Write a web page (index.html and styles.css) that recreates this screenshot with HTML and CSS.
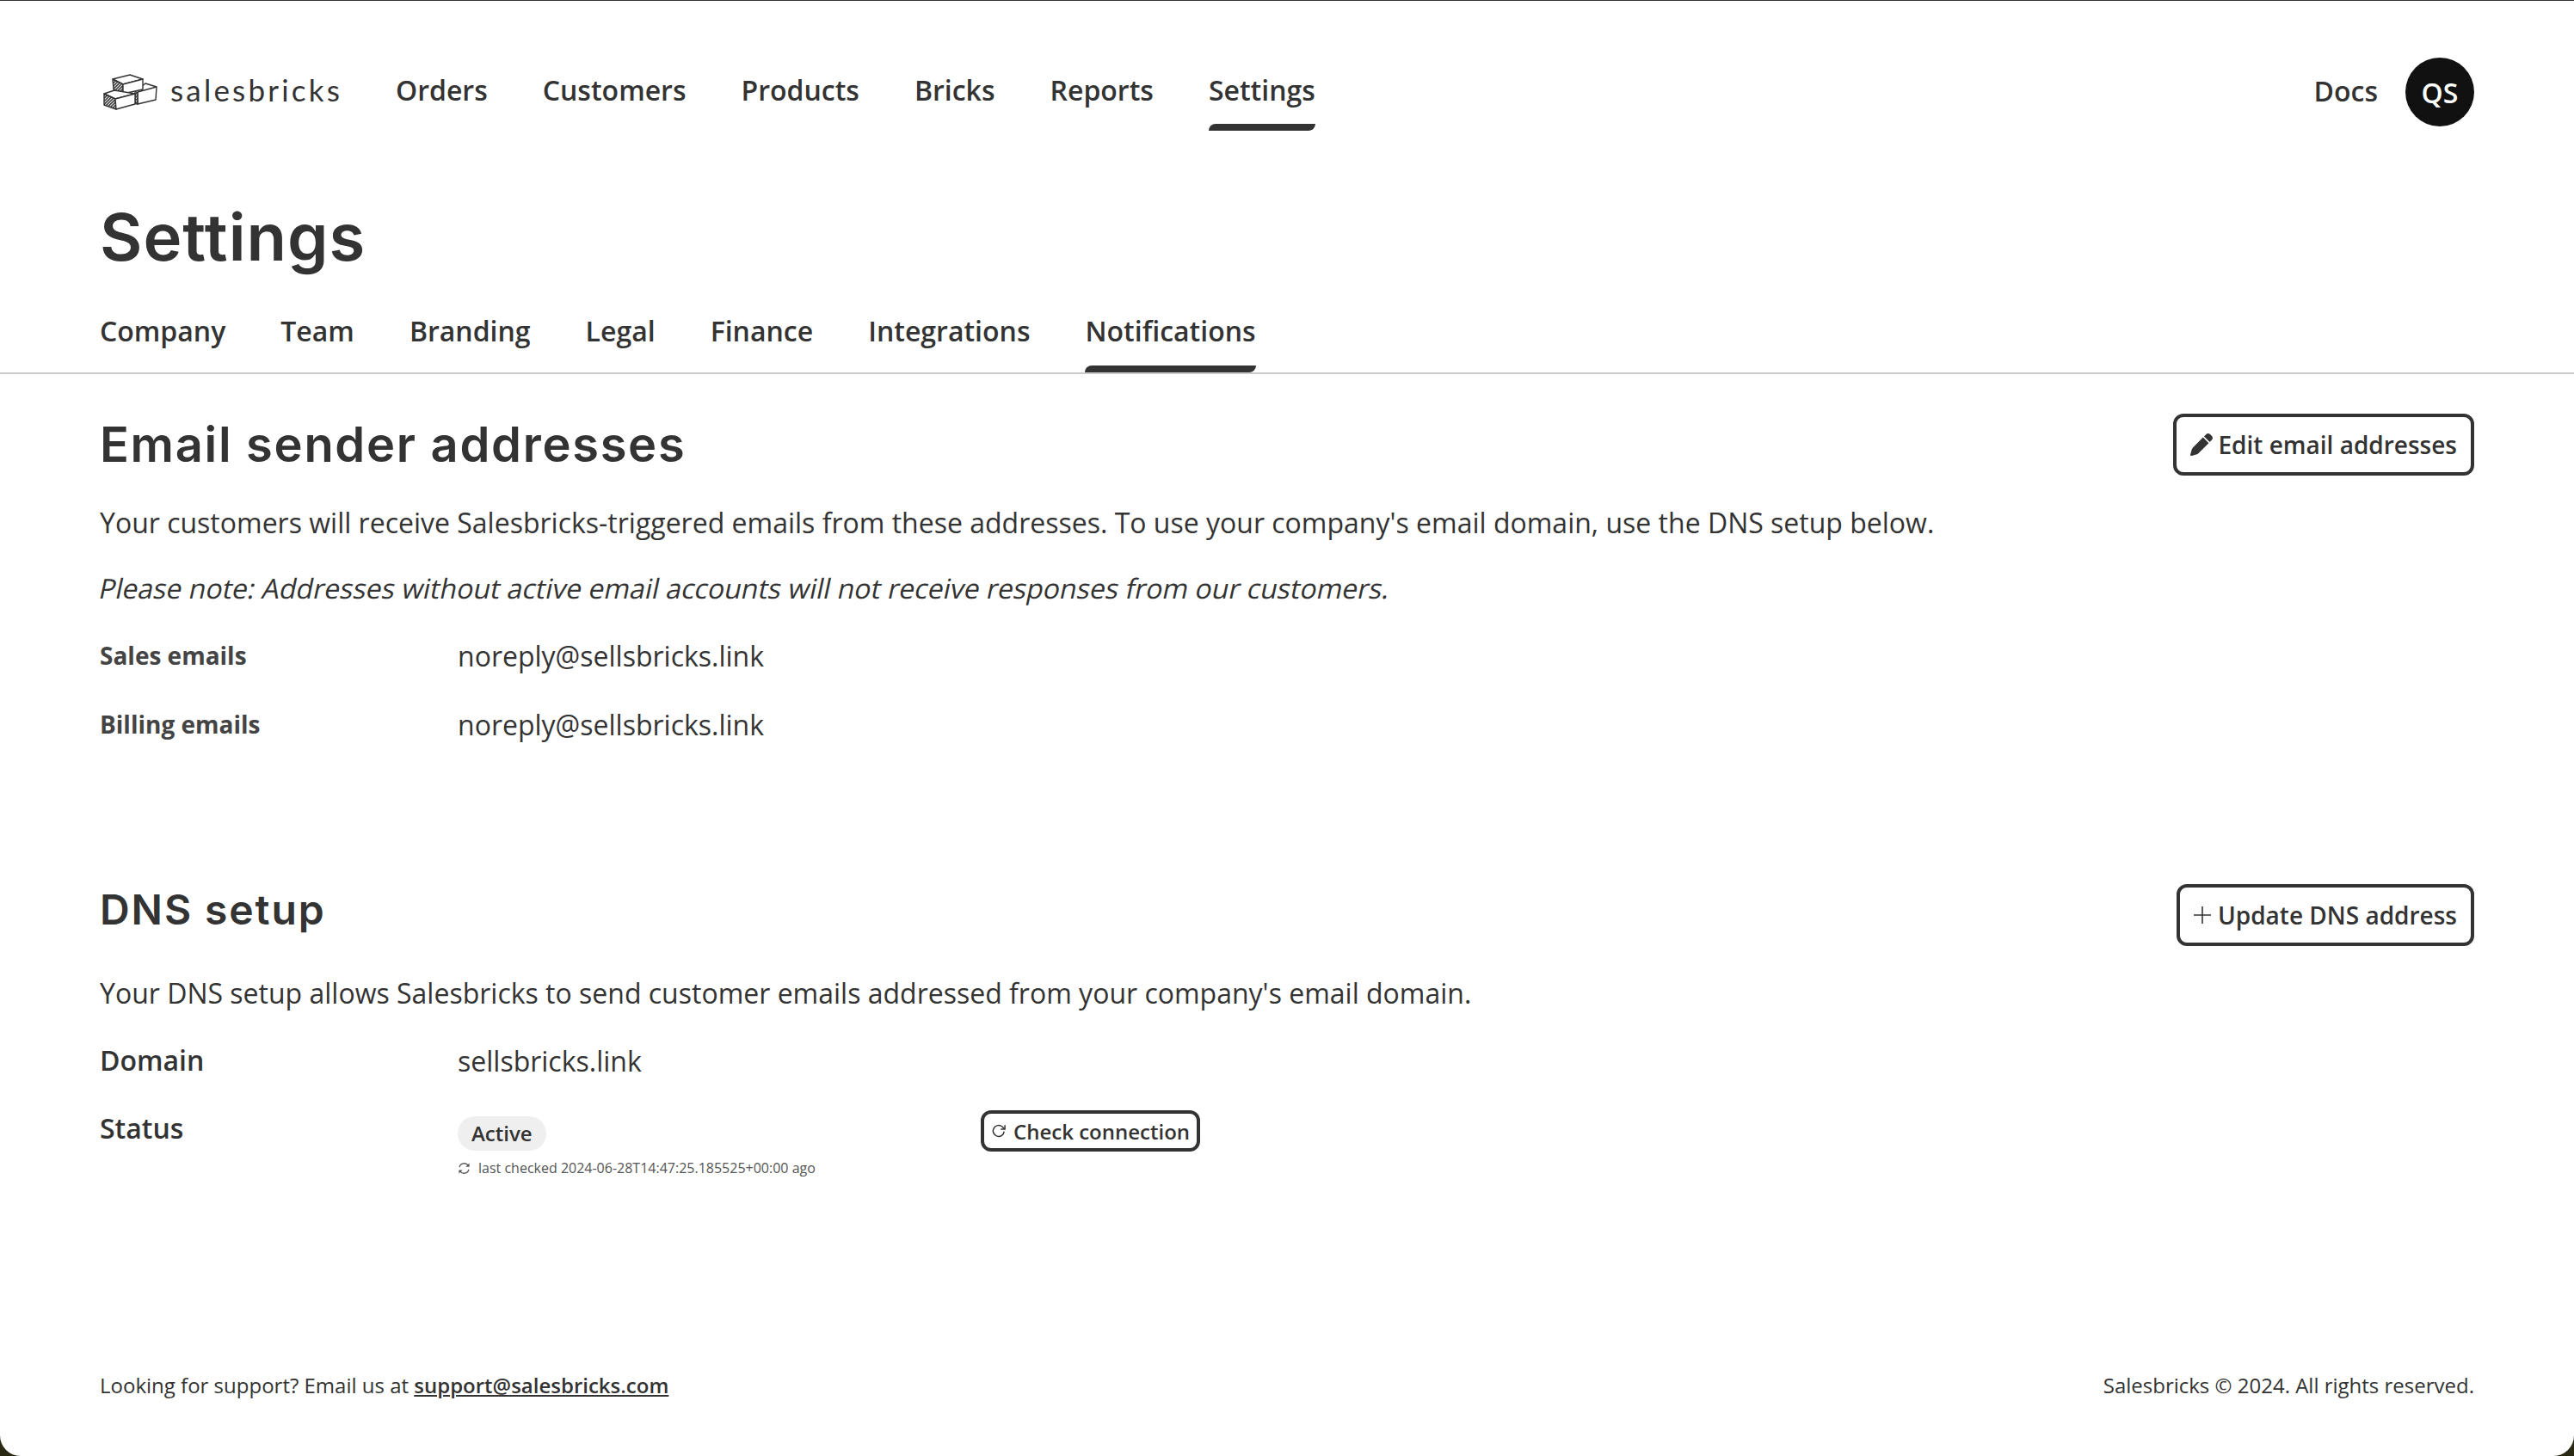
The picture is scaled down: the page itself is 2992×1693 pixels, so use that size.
FILE: index.html
```html
<!DOCTYPE html>
<html lang="en">
<head>
    <meta charset="UTF-8">
    <meta name="viewport" content="width=device-width, initial-scale=1.0">
    <title>Settings - Notifications</title>
    <link rel="stylesheet" href="styles.css">
</head>
<body>
    <div class="app">
        <header class="topbar">
            <a class="logo" href="#">
                <svg class="logo-mark" viewBox="0 0 64 42" fill="#fff" stroke="#333" stroke-width="1.4" stroke-linejoin="round">
                    <defs>
                        <pattern id="hatch" width="2.5" height="2.5" patternUnits="userSpaceOnUse" patternTransform="rotate(-45)">
                            <rect width="2.5" height="2.5" fill="#fff" stroke="none"/>
                            <rect width="2.5" height="1.5" fill="#333" stroke="none"/>
                        </pattern>
                    </defs>
                    <path d="M37 21 L49 11 L62 15 L61 30 L40 35 L37 34 Z"/>
                    <path d="M40 21 L62 15 M40 21 L40 35"/>
                    <path d="M37 23 L40 21 L40 35 L37 34 Z" fill="url(#hatch)"/>
                    <path d="M11 6 L31 1 L46 6 L23 12 Z"/>
                    <path d="M11 6 L23 12 L23 23 L12 18 Z" fill="url(#hatch)"/>
                    <path d="M23 12 L46 6 L46 18 L23 23 Z"/>
                    <path d="M1 23 L13 19 L37 23 L14 29 Z"/>
                    <path d="M1 23 L14 29 L15 41 L1 36 Z" fill="url(#hatch)"/>
                    <path d="M14 29 L37 23 L37 35 L15 41 Z"/>
                </svg>
                <span class="logo-word">salesbricks</span>
            </a>
            <nav class="main-nav">
                <a href="#">Orders</a>
                <a href="#">Customers</a>
                <a href="#">Products</a>
                <a href="#">Bricks</a>
                <a href="#">Reports</a>
                <a class="active" href="#">Settings</a>
            </nav>
            <div class="user-nav">
                <a href="#">Docs</a>
                <div class="avatar">QS</div>
            </div>
        </header>

        <h1 class="page-title">Settings</h1>

        <div class="tabs">
            <a href="#">Company</a>
            <a href="#">Team</a>
            <a href="#">Branding</a>
            <a href="#">Legal</a>
            <a href="#">Finance</a>
            <a href="#">Integrations</a>
            <a class="active" href="#">Notifications</a>
        </div>

        <main class="content">
            <section class="sender">
                <div class="section-head">
                    <h2 class="title-lg">Email sender addresses</h2>
                    <button class="btn">
                        <svg class="btn-icon" viewBox="0 0 512 512"><path fill="#333" d="M362.7 19.3 314.3 67.7 444.3 197.7 492.7 149.3c25-25 25-65.500 0-90.500L453.300 19.300c-25-25-65.500-25-90.600 0zM291.700 90.300 58.600 323.500c-10.400 10.400-18 23.300-22.200 37.400L1 481.200c-2.500 8.500-.2 17.600 6 23.800s15.300 8.500 23.700 6.100l120.300-35.400c14.100-4.200 27-11.800 37.400-22.200L421.700 220.300 291.700 90.300z"/></svg>
                        Edit email addresses
                    </button>
                </div>
                <p>Your customers will receive Salesbricks-triggered emails from these addresses. To use your company's email domain, use the DNS setup below.</p>
                <p class="note"><span>Please note: Addresses without active email accounts will not receive responses from our customers.</span></p>
                <div class="row">
                    <div class="label-sm">Sales emails</div>
                    <div class="value">noreply@sellsbricks.link</div>
                </div>
                <div class="row">
                    <div class="label-sm">Billing emails</div>
                    <div class="value">noreply@sellsbricks.link</div>
                </div>
            </section>

            <section class="dns">
                <div class="section-head">
                    <h2 class="title-md">DNS setup</h2>
                    <button class="btn">
                        <svg class="plus-icon" viewBox="0 0 20 20"><path stroke="#333" stroke-width="1.600" fill="none" d="M10 0v20M0 10h20"/></svg>
                        Update DNS address
                    </button>
                </div>
                <p>Your DNS setup allows Salesbricks to send customer emails addressed from your company's email domain.</p>
                <div class="row">
                    <div class="label">Domain</div>
                    <div class="value">sellsbricks.link</div>
                </div>
                <div class="row status-row">
                    <div class="label">Status</div>
                    <div class="status">
                        <span class="pill">Active</span>
                        <div class="checked">
                            <svg class="checked-icon" viewBox="0 0 16 16" fill="none" stroke="#555" stroke-width="1.400"><path d="M2.200 6.500A6 6 0 0 1 13 4.500M13.800 9.500A6 6 0 0 1 3 11.500"/><path fill="#555" stroke="none" d="M14.500 1.500v4.500H10zM1.500 14.500V10H6z"/></svg>
                            last checked 2024-06-28T14:47:25.185525+00:00 ago
                        </div>
                    </div>
                    <button class="btn btn-small">
                        <svg class="small-icon" viewBox="0 0 16 16" fill="none" stroke="#333" stroke-width="1.300"><path d="M13.500 8.500A5.700 5.700 0 1 1 11.500 3.600L14 6"/><path d="M14.300 2v4.300H10"/></svg>
                        Check connection
                    </button>
                </div>
            </section>
        </main>

        <footer class="footer">
            <div>Looking for support? Email us at <a href="#">support@salesbricks.com</a></div>
            <div>Salesbricks © 2024. All rights reserved.</div>
        </footer>
    </div>
</body>
</html>
```

FILE: styles.css
```css
body {
    font-family: "Open Sans", Arial, sans-serif;
    background-color: #2a2a14;
    color: #333;
    margin: 0;
    padding: 0;
    font-size: 32px;
}
a {
    color: inherit;
    text-decoration: none;
}
.app {
    box-sizing: border-box;
    height: 1693px;
    background: white;
    border-top: 1px solid #333;
    border-radius: 0 0 24px 24px;
    display: flex;
    flex-direction: column;
}
.topbar {
    display: flex;
    padding: 59px 116px 0;
}
.logo {
    display: flex;
    align-items: center;
    width: 344px;
    height: 90px;
    gap: 14px;
}
.logo-mark {
    width: 64px;
    height: 42px;
    margin: 4px 0 0 4px;
}
.logo-word {
    font-family: Lato, sans-serif;
    font-size: 35px;
    letter-spacing: 3.2px;
    margin-top: -2px;
}
.main-nav {
    display: flex;
    gap: 64px;
    flex: 1;
}
.main-nav a {
    font-weight: 600;
    line-height: 90px;
    height: 92px;
    position: relative;
}
.main-nav a.active::after,
.tabs a.active::after {
    content: "";
    position: absolute;
    left: 0;
    right: 0;
    bottom: 0;
    height: 8px;
    background: #333;
    border-radius: 8px 0 8px 0;
}
.user-nav {
    display: flex;
    align-items: center;
    gap: 32px;
    font-weight: 600;
    height: 90px;
}
.avatar {
    width: 80px;
    height: 80px;
    margin-top: 4px;
    border-radius: 50%;
    background: #111;
    color: white;
    display: flex;
    align-items: center;
    justify-content: center;
}
.page-title {
    font-family: Inter, sans-serif;
    font-size: 76px;
    font-weight: 600;
    letter-spacing: 1px;
    line-height: 90px;
    margin: 78px 0 0 116px;
}
.tabs {
    display: flex;
    gap: 64px;
    padding: 0 116px;
    margin-top: 29px;
    border-bottom: 2px solid #ccc;
}
.tabs a {
    font-weight: 600;
    line-height: 72px;
    height: 84px;
    position: relative;
}
.content {
    padding: 0 116px;
    flex: 1;
}
.section-head {
    display: flex;
    justify-content: space-between;
    align-items: center;
}
.sender {
    padding-top: 46px;
}
.title-lg,
.title-md {
    font-family: Inter, sans-serif;
    font-weight: 600;
    margin: 0;
}
.title-lg {
    font-size: 56px;
    letter-spacing: 1.7px;
}
.title-md {
    font-size: 48px;
    letter-spacing: 1.9px;
    margin-bottom: 13px;
}
.btn {
    font-family: "Open Sans", Arial, sans-serif;
    font-size: 28px;
    font-weight: 600;
    color: #333;
    background: white;
    border: 4px solid #333;
    border-radius: 12px;
    height: 72px;
    padding: 0 16px;
    display: flex;
    align-items: center;
    gap: 6px;
}
.btn-icon {
    width: 26px;
    height: 26px;
}
.plus-icon {
    width: 20px;
    height: 20px;
    margin-right: 2px;
}
.btn-small {
    height: 48px;
    font-size: 24px;
    padding: 0 8px;
    gap: 8px;
}
.small-icon {
    width: 18px;
    height: 18px;
}
p {
    margin: 32px 0 0;
    line-height: 44px;
}
.section-head + p {
    margin-top: 33px;
}
.note span {
    display: inline-block;
    transform: skewX(-12deg);
}
.row {
    display: flex;
    align-items: center;
    height: 44px;
    margin-top: 36px;
}
.note + .row {
    margin-top: 34px;
}
.label-sm,
.label {
    width: 416px;
    font-weight: 600;
}
.label-sm {
    font-size: 28px;
    font-weight: 700;
    color: #444;
    margin-top: -1px;
}
.dns {
    padding-top: 164px;
}
.dns .row {
    margin-top: 34px;
}
.dns .status-row {
    align-items: flex-start;
    margin-top: 36px;
}
.label {
    margin-top: -1px;
}
.status {
    width: 608px;
}
.pill {
    display: block;
    width: fit-content;
    font-size: 24px;
    font-weight: 600;
    line-height: 40px;
    background: #efefef;
    border-radius: 20px;
    padding: 0 16px;
    margin-top: 7px;
}
.checked {
    font-size: 16px;
    line-height: 22px;
    color: #555;
    display: flex;
    align-items: center;
    gap: 9px;
    margin-top: 9px;
}
.checked-icon {
    width: 15px;
    height: 15px;
}
.footer {
    display: flex;
    justify-content: space-between;
    padding: 0 116px;
    font-size: 24px;
    line-height: 33px;
    height: 99px;
}
.footer a {
    font-weight: 600;
    text-decoration: underline;
}
```
